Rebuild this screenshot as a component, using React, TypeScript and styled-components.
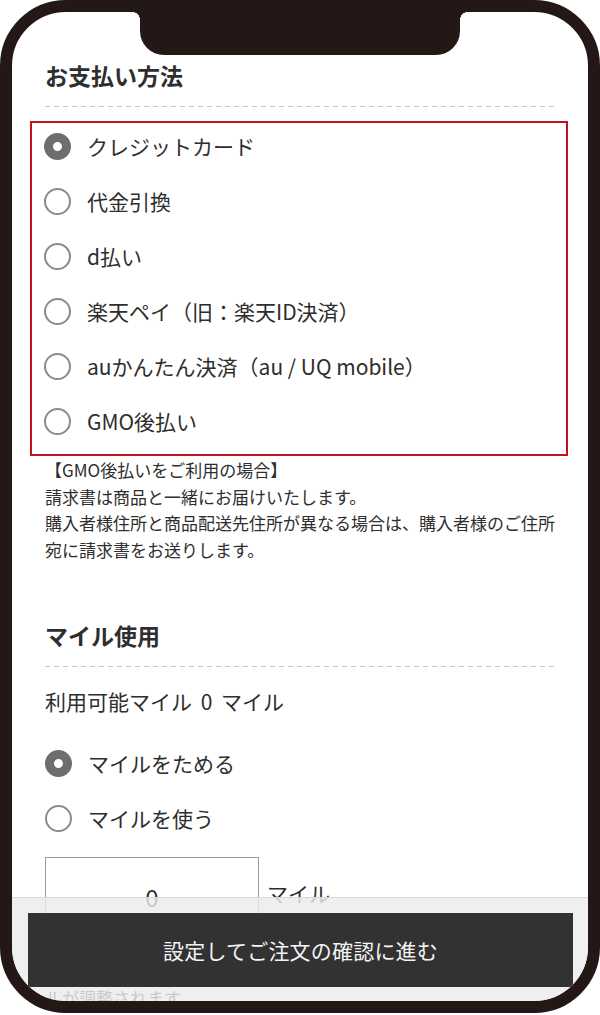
import React from "react";
import styled, { createGlobalStyle } from "styled-components";

const INK = "#231815";

const Global = createGlobalStyle`
  html, body { margin: 0; padding: 0; background: #fff; }
  body {
    font-family: "Noto Sans CJK JP", "Noto Sans", sans-serif;
    color: #2e2e2e;
  }
  * { box-sizing: border-box; }
`;

const Frame = styled.div`
  width: 600px;
  height: 1013px;
  border: 12px solid ${INK};
  border-radius: 66px;
  overflow: hidden;
  background: #fff;
`;

const Screen = styled.div`
  position: relative;
  height: 100%;
  overflow: hidden;
`;

const Notch = styled.div`
  position: absolute;
  top: 0;
  left: 128px;
  width: 320px;
  height: 43px;
  background: ${INK};
  border-radius: 0 0 24px 24px;
  z-index: 3;
  &::before,
  &::after {
    content: "";
    position: absolute;
    top: 0;
    width: 7px;
    height: 7px;
  }
  &::before {
    left: -7px;
    background: radial-gradient(circle at 0 100%, transparent 6.5px, ${INK} 7px);
  }
  &::after {
    right: -7px;
    background: radial-gradient(circle at 100% 100%, transparent 6.5px, ${INK} 7px);
  }
`;

const Content = styled.main`
  padding: 47px 30px 0 33px;
`;

const Section = styled.section<{ $gap?: number }>`
  margin-top: ${(p) => p.$gap ?? 0}px;
`;

const Heading = styled.h2`
  margin: 0;
  font-size: 23px;
  font-weight: 700;
  line-height: 32px;
  color: #2e2e2e;
`;

const Divider = styled.div`
  height: 1px;
  margin-top: 15px;
  background: repeating-linear-gradient(
    to right,
    #c6c6c6 0 5px,
    transparent 5px 9px
  );
`;

const Highlight = styled.div`
  margin: 14px -10px 0 -15px;
  border: 2px solid #c3121b;
  padding: 0 0 5px 12px;
`;

const RadioList = styled.div<{ $shift?: number }>`
  display: flex;
  flex-direction: column;
  margin-top: ${(p) => p.$shift ?? 0}px;
`;

const Row = styled.label`
  display: flex;
  align-items: center;
  gap: 16px;
  height: 55px;
  font-size: 21px;
  line-height: 1;
  color: #2e2e2e;
`;

const RadioDot = styled.input.attrs({ type: "radio" })`
  appearance: none;
  margin: 0;
  flex: none;
  width: 27px;
  height: 27px;
  border-radius: 50%;
  background: #fff;
  border: 2px solid #8a8a8a;
  &:checked {
    border: 9px solid #6e6e6e;
  }
`;

const Note = styled.p`
  margin: 1px 0 0;
  font-size: 17px;
  line-height: 26.5px;
  color: #2e2e2e;
`;

const Plain = styled.p<{ $gap: number }>`
  margin: ${(p) => p.$gap}px 0 0;
  font-size: 21px;
  line-height: 32px;
  word-spacing: 4px;
  color: #2e2e2e;
`;

const InputRow = styled.div`
  display: flex;
  align-items: center;
  gap: 8px;
  margin-top: 11px;
`;

const MileInput = styled.input`
  width: 214px;
  height: 72px;
  border: 1px solid #9c9c9c;
  border-radius: 0;
  background: #fff;
  font-family: inherit;
  font-size: 24px;
  color: #2e2e2e;
  text-align: center;
  padding: 6px 0 0;
  margin: 0;
`;

const Unit = styled.span`
  font-size: 21px;
  color: #2e2e2e;
`;

const Fine = styled.p`
  margin: 30px 0 0;
  font-size: 17px;
  line-height: 26px;
  color: #2e2e2e;
`;

const BottomBar = styled.div`
  position: absolute;
  left: 0;
  right: 0;
  bottom: 0;
  height: 104px;
  border-top: 1px solid #d8d8d8;
  background: rgba(236, 236, 236, 0.82);
  padding: 15px 15px 0 16px;
  z-index: 2;
`;

const SubmitButton = styled.button`
  display: block;
  width: 100%;
  height: 74px;
  border: none;
  border-radius: 0;
  background: #323232;
  color: #f4f4f4;
  font-family: inherit;
  font-size: 21px;
  letter-spacing: 0.2px;
  cursor: pointer;
`;

const payments = [
  "クレジットカード",
  "代金引換",
  "d払い",
  "楽天ペイ（旧：楽天ID決済）",
  "auかんたん決済（au / UQ mobile）",
  "GMO後払い",
];

export default function App() {
  return (
    <>
      <Global />
      <Frame>
        <Screen>
          <Notch />
          <Content>
            <Section>
              <Heading>お支払い方法</Heading>
              <Divider />
              <Highlight>
                <RadioList $shift={-4}>
                  {payments.map((p, i) => (
                    <Row key={p}>
                      <RadioDot name="pay" defaultChecked={i === 0} />
                      {p}
                    </Row>
                  ))}
                </RadioList>
              </Highlight>
              <Note>
                【GMO後払いをご利用の場合】
                <br />
                請求書は商品と一緒にお届けいたします。
                <br />
                購入者様住所と商品配送先住所が異なる場合は、購入者様のご住所
                <br />
                宛に請求書をお送りします。
              </Note>
            </Section>

            <Section $gap={56}>
              <Heading>マイル使用</Heading>
              <Divider />
              <Plain $gap={18}>利用可能マイル 0 マイル</Plain>
              <RadioList $shift={19}>
                <Row>
                  <RadioDot name="mile" defaultChecked />
                  マイルをためる
                </Row>
                <Row>
                  <RadioDot name="mile" />
                  マイルを使う
                </Row>
              </RadioList>
              <InputRow>
                <MileInput defaultValue="0" />
                <Unit>マイル</Unit>
              </InputRow>
              <Fine>
                ※ご注文内容の変更などにより、ご利用・獲得予定のマイ
                <br />
                ルが調整されます。
              </Fine>
            </Section>
          </Content>
          <BottomBar>
            <SubmitButton>設定してご注文の確認に進む</SubmitButton>
          </BottomBar>
        </Screen>
      </Frame>
    </>
  );
}
